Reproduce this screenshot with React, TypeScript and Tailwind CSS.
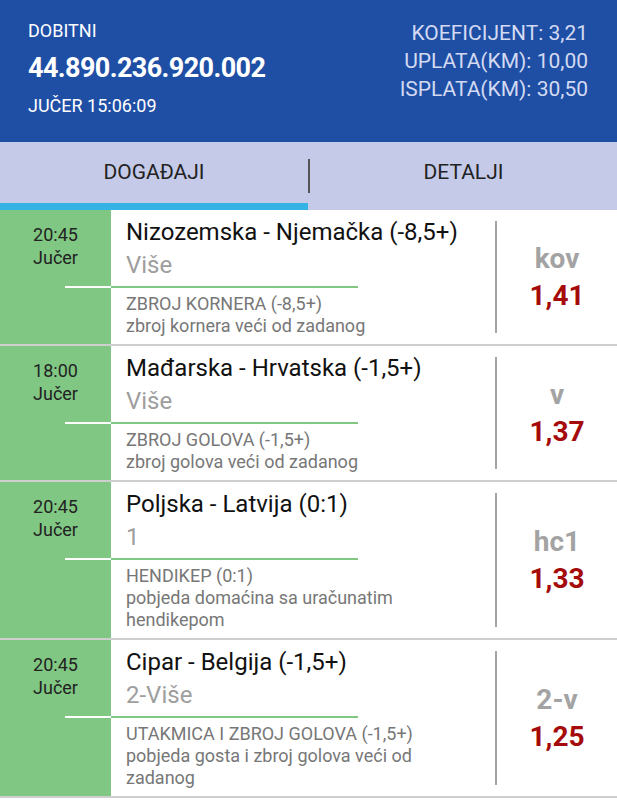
import React from "react";

type Bet = {
  time: string;
  title: string;
  pick: string;
  market: string;
  desc: string[];
  code: string;
  odds: string;
};

const bets: Bet[] = [
  {
    time: "20:45",
    title: "Nizozemska - Njemačka (-8,5+)",
    pick: "Više",
    market: "ZBROJ KORNERA (-8,5+)",
    desc: ["zbroj kornera veći od zadanog"],
    code: "kov",
    odds: "1,41",
  },
  {
    time: "18:00",
    title: "Mađarska - Hrvatska (-1,5+)",
    pick: "Više",
    market: "ZBROJ GOLOVA (-1,5+)",
    desc: ["zbroj golova veći od zadanog"],
    code: "v",
    odds: "1,37",
  },
  {
    time: "20:45",
    title: "Poljska - Latvija (0:1)",
    pick: "1",
    market: "HENDIKEP (0:1)",
    desc: ["pobjeda domaćina sa uračunatim", "hendikepom"],
    code: "hc1",
    odds: "1,33",
  },
  {
    time: "20:45",
    title: "Cipar - Belgija (-1,5+)",
    pick: "2-Više",
    market: "UTAKMICA I ZBROJ GOLOVA (-1,5+)",
    desc: ["pobjeda gosta i zbroj golova veći od", "zadanog"],
    code: "2-v",
    odds: "1,25",
  },
];

function BetRow({ bet }: { bet: Bet }) {
  return (
    <div className="flex border-b-2 border-[#cfcfcf]">
      <div className="flex flex-1 flex-col">
        <div className="flex">
          <div className="w-[111px] shrink-0 bg-[#80c783] pt-[13px] text-center text-[18px] leading-[23px] text-[#222]">
            <div>{bet.time}</div>
            <div>Jučer</div>
          </div>
          <div className="pl-[15px] pt-[6px] pb-[4px]">
            <div className="text-[24px] leading-[33px] text-[#111]">{bet.title}</div>
            <div className="text-[24px] leading-[33px] text-[#9e9e9e]">{bet.pick}</div>
          </div>
        </div>
        <div className="flex h-[2px]">
          <div className="w-[111px] shrink-0 bg-[#80c783]">
            <div className="ml-[65px] h-full bg-white" />
          </div>
          <div className="w-[247px] bg-[#80c783]" />
        </div>
        <div className="flex flex-1">
          <div className="w-[111px] shrink-0 bg-[#80c783]" />
          <div className="pl-[15px] pt-[5px] pb-[7px] text-[18px] leading-[22px] text-[#777]">
            <div>{bet.market}</div>
            {bet.desc.map((d) => (
              <div key={d}>{d}</div>
            ))}
          </div>
        </div>
      </div>
      <div className="flex w-[122px] shrink-0">
        <div className="my-[11px] w-[2px] bg-[#a3a3a3]" />
        <div className="flex flex-1 flex-col items-center justify-center font-bold text-[28px] leading-[37px]">
          <div className="text-[#a3a3a3]">{bet.code}</div>
          <div className="text-[#a50b0b]">{bet.odds}</div>
        </div>
      </div>
    </div>
  );
}

export default function App() {
  return (
    <div className="w-[617px] min-h-[800px] bg-white font-['Roboto',sans-serif]">
      <div className="flex h-[142px] justify-between bg-[#1f4fa5] pl-[28px] pr-[29px]">
        <div className="pt-[20px] text-white">
          <div className="text-[18px] leading-[22px]">DOBITNI</div>
          <div className="mt-[9px] text-[27px] font-bold leading-[34px] tracking-[-0.6px]">44.890.236.920.002</div>
          <div className="mt-[10px] text-[18px] leading-[22px]">JUČER 15:06:09</div>
        </div>
        <div className="pt-[19px] text-right text-[21px] leading-[28px] text-[#d3daf2]">
          <div>KOEFICIJENT: 3,21</div>
          <div>UPLATA(KM): 10,00</div>
          <div>ISPLATA(KM): 30,50</div>
        </div>
      </div>
      <div className="flex h-[68px] bg-[#c5cae9] text-[21px] text-[#222]">
        <div className="flex w-[308px] flex-col">
          <div className="flex flex-1 items-center justify-center">DOGAĐAJI</div>
          <div className="h-[7px] bg-[#34b4e4]" />
        </div>
        <div className="mt-[17px] h-[34px] w-[2px] bg-[#555]" />
        <div className="flex flex-1 items-center justify-center pb-[7px]">DETALJI</div>
      </div>
      {bets.map((b, i) => (
        <BetRow key={i} bet={b} />
      ))}
    </div>
  );
}
